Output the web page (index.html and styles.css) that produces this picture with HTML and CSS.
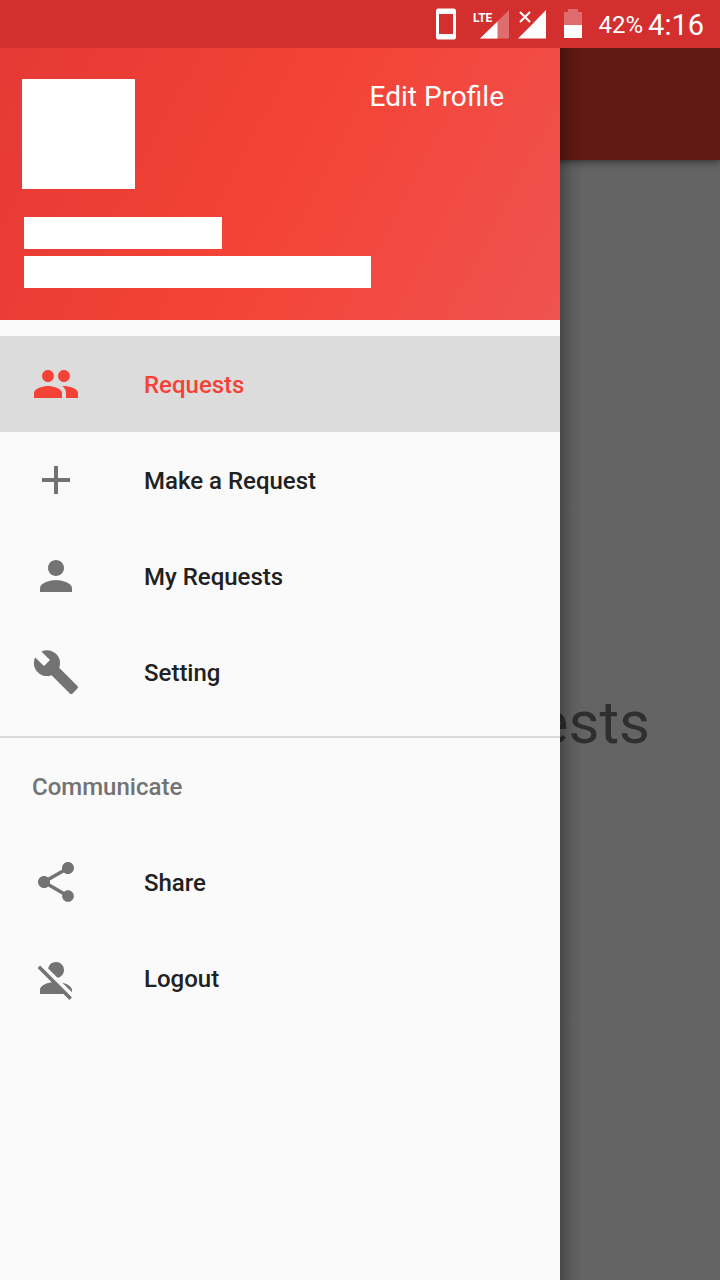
FILE: index.html
```html
<!DOCTYPE html>
<html lang="en">
<head>
<meta charset="utf-8">
<meta name="viewport" content="width=device-width, initial-scale=1">
<title>Requests</title>
<link rel="stylesheet" href="styles.css">
</head>
<body>
<div class="app">
  <header class="status">
    <svg class="status-phone" width="20" height="32" viewBox="0 0 20 32" aria-hidden="true"><path fill="#fff" fill-rule="evenodd" d="M2 0.500H18Q20 0.500 20 3V29Q20 31.500 18 31.500H2Q0 31.500 0 29V3Q0 0.500 2 0.500ZM3 6V26H17V6Z"/></svg>
    <svg class="status-lte" width="36" height="30" viewBox="0 0 36 30"><path fill="#fff" fill-opacity=".3" d="M36 1V29.500H7Z"/><path fill="#fff" d="M24.500 12.500V29.500H7Z"/><text class="lte" x="0" y="13">LTE</text></svg>
    <svg class="status-signal" width="28" height="30" viewBox="0 0 28 30" aria-hidden="true"><path fill="#fff" d="M28 1V29.500H0L12 17.500Z"/><path stroke="#d32f2f" stroke-width="5" d="M2 3L12 13M12 3L2 13"/><path stroke="#fff" stroke-width="2" d="M2 3L12 13M12 3L2 13"/></svg>
    <svg class="status-battery" width="18" height="30" viewBox="0 0 18 30" aria-hidden="true"><path fill="#fff" fill-opacity=".3" d="M4 0H14V3H18V16H0V3H4Z"/><path fill="#fff" d="M0 16H18V29H0Z"/></svg>
    <span class="percent">42%</span>
    <time class="clock">4:16</time>
  </header>

  <div class="stage">
    <main class="page">
      <div class="toolbar"></div>
      <div class="content"><h1 class="title">Requests</h1></div>
    </main>
    <div class="scrim"></div>

    <aside class="drawer">
      <section class="profile">
        <div class="profile-top">
          <div class="avatar"></div>
          <button class="edit" type="button">Edit Profile</button>
        </div>
        <div class="bar bar-name"></div>
        <div class="bar bar-mail"></div>
      </section>
      <nav class="menu">
        <a class="item active" href="#requests" aria-current="page">
          <svg class="icon" viewBox="0 0 24 24"><path d="M16 11c1.660 0 2.990-1.340 2.990-3S17.660 5 16 5c-1.660 0-3 1.340-3 3s1.340 3 3 3zm-8 0c1.660 0 2.990-1.340 2.990-3S9.660 5 8 5C6.340 5 5 6.340 5 8s1.340 3 3 3zm0 2c-2.330 0-7 1.170-7 3.500V19h14v-2.500c0-2.330-4.670-3.500-7-3.500zm8 0c-.290 0-.620.020-.970.050 1.160.840 1.970 1.970 1.970 3.450V19h6v-2.500c0-2.330-4.670-3.500-7-3.500z"/></svg>
          <span class="label">Requests</span>
        </a>
        <a class="item" href="#make">
          <svg class="icon" viewBox="0 0 24 24"><path d="M19 13h-6v6h-2v-6H5v-2h6V5h2v6h6v2z"/></svg>
          <span class="label">Make a Request</span>
        </a>
        <a class="item" href="#mine">
          <svg class="icon" viewBox="0 0 24 24"><path d="M12 12c2.210 0 4-1.790 4-4s-1.790-4-4-4-4 1.790-4 4 1.790 4 4 4zm0 2c-2.670 0-8 1.340-8 4v2h16v-2c0-2.660-5.330-4-8-4z"/></svg>
          <span class="label">My Requests</span>
        </a>
        <a class="item" href="#setting">
          <svg class="icon" viewBox="0 0 24 24"><path d="M22.700 19l-9.100-9.100c.900-2.300.400-5-1.500-6.900-2-2-5-2.400-7.400-1.300L9 6 6 9 1.600 4.700C.400 7.100.900 10.100 2.900 12.100c1.900 1.900 4.600 2.400 6.900 1.500l9.100 9.100c.400.400 1 .400 1.400 0l2.300-2.300c.500-.400.500-1.100.100-1.400z"/></svg>
          <span class="label">Setting</span>
        </a>
      </nav>
      <nav class="menu menu-more" aria-labelledby="communicate">
        <h2 class="group" id="communicate">Communicate</h2>
        <a class="item" href="#share">
          <svg class="icon" viewBox="0 0 24 24"><path d="M18 16.080c-.760 0-1.440.300-1.960.770L8.910 12.700c.050-.230.090-.460.090-.700s-.040-.470-.090-.700l7.050-4.110c.540.500 1.250.810 2.040.810 1.660 0 3-1.340 3-3s-1.340-3-3-3-3 1.340-3 3c0 .240.040.470.090.700L8.040 9.810C7.500 9.310 6.790 9 6 9c-1.660 0-3 1.340-3 3s1.340 3 3 3c.790 0 1.500-.310 2.040-.810l7.120 4.160c-.050.210-.080.430-.080.650 0 1.610 1.310 2.920 2.920 2.920s2.920-1.310 2.920-2.920-1.310-2.920-2.920-2.920z"/></svg>
          <span class="label">Share</span>
        </a>
        <a class="item" href="#logout">
          <svg class="icon" viewBox="0 0 24 24"><path d="M12 4A4 4 0 0 1 16 8C16 9.950 14.600 11.580 12.750 11.930L8.070 7.250C8.420 5.400 10.050 4 12 4M12.280 14L18.280 20L20 21.720L18.730 23L15.730 20H4V18C4 16.160 6.500 14.610 9.870 14.140L2.780 7.050L4.050 5.780L12.280 14M20 18V19.180L15.140 14.320C18 14.930 20 16.350 20 18Z"/></svg>
          <span class="label">Logout</span>
        </a>
      </nav>
    </aside>
  </div>
</div>
</body>
</html>
```
FILE: styles.css
```css
* {
  box-sizing: border-box;
}

body {
  margin: 0;
  font-family: Roboto, "Noto Sans", sans-serif;
  background: #fafafa;
}

.app {
  display: flex;
  flex-direction: column;
  min-height: 100vh;
}

.status {
  display: flex;
  align-items: center;
  justify-content: flex-end;
  height: 48px;
  padding-right: 16px;
  background: #d32f2f;
  color: #fff;
}

.status-phone {
  margin-right: 17px;
}

.status-lte {
  margin-right: 9px;
}

.status-signal {
  margin-right: 18px;
}

.status-battery {
  margin-right: 17px;
}

.lte {
  font: bold 12px Roboto, sans-serif;
  fill: #fff;
}

.percent {
  margin-right: 5px;
  padding-top: 2px;
  font-size: 24px;
  line-height: 46px;
}

.clock {
  padding-top: 2px;
  font-size: 29px;
  line-height: 46px;
}

.stage {
  position: relative;
  display: flex;
  flex: 1;
  overflow: hidden;
}

.page {
  display: flex;
  flex: 1;
  flex-direction: column;
}

.toolbar {
  height: 112px;
  background: #f44336;
  box-shadow: 0 2px 8px rgba(0, 0, 0, 0.5);
}

.content {
  display: flex;
  flex: 1;
  align-items: center;
  justify-content: flex-end;
  padding: 6px 70px 0 0;
}

.title {
  margin: 0;
  font-size: 60px;
  font-weight: 400;
  line-height: 72px;
  color: #757575;
}

.scrim {
  position: absolute;
  inset: 0;
  background: rgba(0, 0, 0, 0.6);
}

.drawer {
  position: absolute;
  top: 0;
  bottom: 0;
  left: 0;
  width: calc(100% - 160px);
  background: #fafafa;
}

.drawer::after {
  content: "";
  position: absolute;
  top: 0;
  bottom: 0;
  left: 100%;
  width: 24px;
  background: linear-gradient(90deg, rgba(0, 0, 0, 0.28), rgba(0, 0, 0, 0.08) 50%, transparent);
}

.profile {
  padding: 31px 24px 32px;
  background: linear-gradient(118deg, #e53935, #f44336 50%, #ef5350);
}

.profile-top {
  display: flex;
  align-items: flex-start;
  justify-content: space-between;
  margin: 0 32px 28px -2px;
}

.avatar {
  width: 113px;
  height: 110px;
  background: #fff;
}

.edit {
  padding: 0;
  border: 0;
  background: none;
  color: #fff;
  font: 400 28px/36px Roboto, sans-serif;
}

.bar {
  height: 32px;
  background: #fff;
}

.bar-name {
  width: 198px;
  margin-bottom: 7px;
}

.bar-mail {
  width: 347px;
}

.menu {
  padding: 16px 0;
}

.menu-more {
  padding-top: 0;
  border-top: 2px solid #dadada;
}

.item {
  display: flex;
  align-items: center;
  gap: 64px;
  height: 96px;
  padding: 0 32px;
  color: #212121;
  font-size: 24px;
  font-weight: 500;
  line-height: 32px;
  text-decoration: none;
}

.label {
  padding-top: 2px;
}

.icon {
  width: 48px;
  height: 48px;
  fill: #737373;
}

.active {
  background: #dcdcdc;
  color: #f44336;
}

.active .icon {
  fill: #f44336;
}

.group {
  margin: 0;
  padding: 2px 32px 0;
  color: #737373;
  font-size: 24px;
  font-weight: 500;
  line-height: 94px;
}
```
